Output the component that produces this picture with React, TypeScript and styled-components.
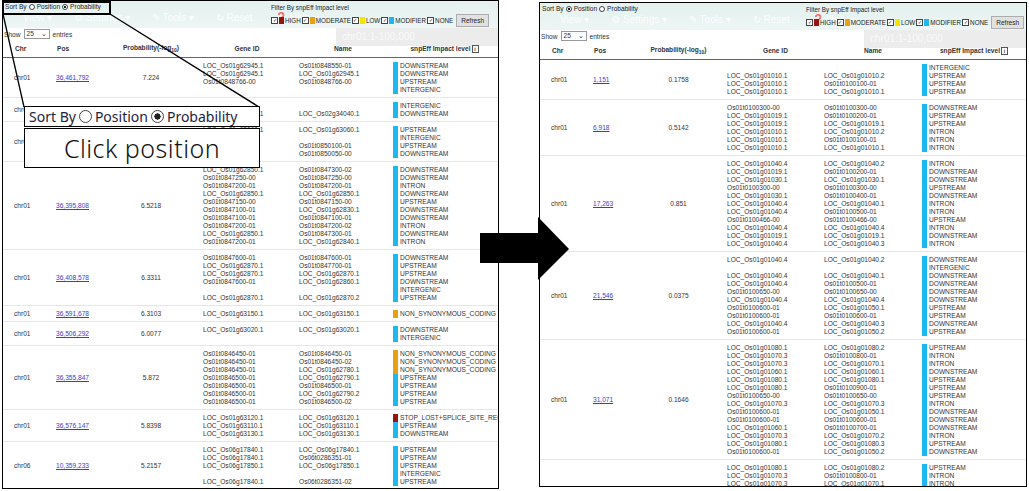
import React from "react";
import styled, { createGlobalStyle } from "styled-components";

const Global = createGlobalStyle`
  html, body { margin: 0; padding: 0; background: #fff; }
  body { font-family: "Liberation Sans", Arial, sans-serif; width: 1029px; height: 491px; overflow: hidden; }
`;

type Imp = { t: string; c: string };
type Row = { chr: string; pos: string; prob: string; genes: string[]; names: string[]; imps: Imp[] };

const M = "#1bb9f0", O = "#e8a010", H = "#9b1010";
const im = (s: string): Imp[] =>
  s.split(",").map((x) => {
    const map: Record<string, string> = { D: "DOWNSTREAM", U: "UPSTREAM", I: "INTRON", G: "INTERGENIC", N: "NON_SYNONYMOUS_CODING", S: "STOP_LOST+SPLICE_SITE_REGION" };
    return { t: map[x], c: x === "N" ? O : x === "S" ? H : M };
  });

const leftRows: Row[] = [
  { chr: "chr01", pos: "36,461,792", prob: "7.224", genes: ["LOC_Os01g62945.1", "LOC_Os01g62945.1", "Os01t0848766-00", ""], names: ["Os01t0848550-01", "LOC_Os01g62945.1", "Os01t0848766-00", ""], imps: im("D,D,U,G") },
  { chr: "chr01", pos: "36,469,321", prob: "7.0412", genes: ["", "LOC_Os02g34040.1"], names: ["", "LOC_Os02g34040.1"], imps: im("G,D") },
  { chr: "chr01", pos: "36,497,103", prob: "6.9811", genes: ["LOC_Os01g63060.1", "", "Os01t0850100-01", "Os01t0850050-00"], names: ["LOC_Os01g63060.1", "", "Os01t0850100-01", "Os01t0850050-00"], imps: im("U,G,U,D") },
  { chr: "chr01", pos: "36,395,808", prob: "6.5218", genes: ["LOC_Os01g62850.1", "Os01t0847250-00", "Os01t0847200-01", "LOC_Os01g62850.1", "Os01t0847150-00", "Os01t0847100-01", "Os01t0847100-01", "Os01t0847200-01", "LOC_Os01g62850.1", "Os01t0847200-01"], names: ["Os01t0847300-02", "Os01t0847250-00", "Os01t0847200-01", "LOC_Os01g62850.1", "Os01t0847150-00", "LOC_Os01g62830.1", "Os01t0847100-01", "Os01t0847200-02", "Os01t0847300-01", "LOC_Os01g62840.1"], imps: im("D,D,I,D,U,D,D,I,D,I") },
  { chr: "chr01", pos: "36,408,578", prob: "6.3311", genes: ["Os01t0847600-01", "LOC_Os01g62870.1", "LOC_Os01g62870.1", "Os01t0847600-01", "", "LOC_Os01g62870.1"], names: ["Os01t0847600-01", "Os01t0847700-01", "LOC_Os01g62870.1", "LOC_Os01g62860.1", "", "LOC_Os01g62870.2"], imps: im("D,U,U,D,G,U") },
  { chr: "chr01", pos: "36,591,678", prob: "6.3103", genes: ["LOC_Os01g63150.1"], names: ["LOC_Os01g63150.1"], imps: im("N") },
  { chr: "chr01", pos: "36,506,292", prob: "6.0077", genes: ["LOC_Os01g63020.1", ""], names: ["LOC_Os01g63020.1", ""], imps: im("D,G") },
  { chr: "chr01", pos: "36,355,847", prob: "5.872", genes: ["Os01t0846450-01", "Os01t0846450-01", "Os01t0846450-01", "Os01t0846500-01", "Os01t0846500-01", "Os01t0846500-01", "Os01t0846500-01"], names: ["Os01t0846450-01", "Os01t0846450-02", "LOC_Os01g62780.1", "LOC_Os01g62790.1", "Os01t0846500-01", "LOC_Os01g62790.2", "Os01t0846500-02"], imps: im("N,N,N,U,U,U,U") },
  { chr: "chr01", pos: "36,576,147", prob: "5.8398", genes: ["LOC_Os01g63120.1", "LOC_Os01g63110.1", "LOC_Os01g63130.1"], names: ["LOC_Os01g63120.1", "LOC_Os01g63110.1", "LOC_Os01g63130.1"], imps: im("S,U,D") },
  { chr: "chr06", pos: "10,359,233", prob: "5.2157", genes: ["LOC_Os06g17840.1", "LOC_Os06g17840.1", "LOC_Os06g17850.1", "", "LOC_Os06g17840.1"], names: ["LOC_Os06g17840.1", "Os06t0286351-01", "LOC_Os06g17850.1", "", "Os06t0286351-02"], imps: im("U,U,U,G,U") },
];

const rightRows: Row[] = [
  { chr: "chr01", pos: "1,151", prob: "0.1758", genes: ["", "LOC_Os01g01010.1", "LOC_Os01g01010.1", "LOC_Os01g01010.1"], names: ["", "LOC_Os01g01010.2", "Os01t0100100-01", "LOC_Os01g01010.1"], imps: im("G,U,U,U") },
  { chr: "chr01", pos: "6,918", prob: "0.5142", genes: ["Os01t0100300-00", "LOC_Os01g01019.1", "LOC_Os01g01019.1", "LOC_Os01g01010.1", "LOC_Os01g01010.1", "LOC_Os01g01010.1"], names: ["Os01t0100300-00", "Os01t0100200-01", "LOC_Os01g01019.1", "LOC_Os01g01010.2", "Os01t0100100-01", "LOC_Os01g01010.1"], imps: im("D,U,U,I,I,I") },
  { chr: "chr01", pos: "17,263", prob: "0.851", genes: ["LOC_Os01g01040.4", "LOC_Os01g01019.1", "LOC_Os01g01030.1", "Os01t0100300-00", "LOC_Os01g01030.1", "LOC_Os01g01040.4", "LOC_Os01g01040.4", "Os01t0100466-00", "LOC_Os01g01040.4", "LOC_Os01g01019.1", "LOC_Os01g01040.4"], names: ["LOC_Os01g01040.2", "Os01t0100200-01", "LOC_Os01g01030.1", "Os01t0100300-00", "Os01t0100400-01", "LOC_Os01g01040.1", "Os01t0100500-01", "Os01t0100466-00", "LOC_Os01g01040.4", "LOC_Os01g01019.1", "LOC_Os01g01040.3"], imps: im("I,D,D,U,D,I,I,U,I,D,I") },
  { chr: "chr01", pos: "21,546", prob: "0.0375", genes: ["LOC_Os01g01040.4", "", "LOC_Os01g01040.4", "LOC_Os01g01040.4", "Os01t0100650-00", "LOC_Os01g01040.4", "Os01t0100600-01", "Os01t0100600-01", "LOC_Os01g01040.4", "Os01t0100600-01"], names: ["LOC_Os01g01040.2", "", "LOC_Os01g01040.1", "Os01t0100500-01", "Os01t0100650-00", "LOC_Os01g01040.4", "LOC_Os01g01050.1", "Os01t0100600-01", "LOC_Os01g01040.3", "LOC_Os01g01050.2"], imps: im("D,G,D,D,D,D,U,U,D,U") },
  { chr: "chr01", pos: "31,071", prob: "0.1646", genes: ["LOC_Os01g01080.1", "LOC_Os01g01070.3", "LOC_Os01g01070.3", "LOC_Os01g01060.1", "LOC_Os01g01080.1", "LOC_Os01g01080.1", "Os01t0100650-00", "LOC_Os01g01070.3", "Os01t0100600-01", "Os01t0100600-01", "LOC_Os01g01060.1", "LOC_Os01g01070.3", "LOC_Os01g01080.1", "Os01t0100600-01"], names: ["LOC_Os01g01080.2", "Os01t0100800-01", "LOC_Os01g01070.1", "LOC_Os01g01060.1", "LOC_Os01g01080.1", "Os01t0100900-01", "Os01t0100650-00", "LOC_Os01g01070.3", "LOC_Os01g01050.1", "Os01t0100600-01", "Os01t0100700-01", "LOC_Os01g01070.2", "LOC_Os01g01080.3", "LOC_Os01g01050.2"], imps: im("U,I,I,D,U,U,U,I,D,D,D,I,U,D") },
  { chr: "chr01", pos: "33,667", prob: "0.1926", genes: ["LOC_Os01g01080.1", "LOC_Os01g01070.3", "LOC_Os01g01070.3", "LOC_Os01g01080.1", "LOC_Os01g01080.1", "LOC_Os01g01060.1", "Os01t0100650-00", "LOC_Os01g01070.3", "Os01t0100600-01", "LOC_Os01g01080.1"], names: ["LOC_Os01g01080.2", "Os01t0100800-01", "LOC_Os01g01070.1", "LOC_Os01g01080.1", "Os01t0100900-01", "LOC_Os01g01060.1", "Os01t0100650-00", "LOC_Os01g01070.3", "LOC_Os01g01050.1", "LOC_Os01g01080.3"], imps: im("U,I,I,U,U,D,U,I,D,U") },
];

const Page = styled.div`
  position: relative;
  display: flex;
  align-items: flex-start;
  gap: 40px;
  padding: 0 0 0 2px;
  width: 1029px;
  height: 491px;
  box-sizing: border-box;
`;

const Panel = styled.div<{ $w: number; $h: number; $top: number }>`
  position: relative;
  width: ${(p) => p.$w}px;
  height: ${(p) => p.$h}px;
  margin-top: ${(p) => p.$top}px;
  border: 1px solid #000;
  box-sizing: border-box;
  overflow: hidden;
  background: #fff;
  font-size: 6.6px;
  color: #333;
`;

const TopBand = styled.div`
  position: relative;
  height: 27px;
  background: linear-gradient(#e4f1ef, #edf6f4);
`;

const GhostMenu = styled.div`
  position: absolute;
  left: 20px;
  top: 11px;
  display: flex;
  gap: 22px;
  font-size: 10px;
  color: rgba(255, 255, 255, 0.85);
`;

const GrayBox = styled.div`
  position: absolute;
  right: 0;
  top: 27px;
  width: 162px;
  height: 18px;
  background: #ececec;
  color: #fafafa;
  font-size: 10px;
  padding: 3px 6px;
  box-sizing: border-box;
`;

const SortBy = styled.div`
  position: absolute;
  left: 2px;
  top: 2px;
  display: flex;
  align-items: center;
  gap: 2px;
  font-size: 6.6px;
  color: #222;
`;

const Radio = styled.span<{ $on?: boolean; $size: number }>`
  display: inline-block;
  width: ${(p) => p.$size}px;
  height: ${(p) => p.$size}px;
  border-radius: 50%;
  border: 1px solid #444;
  box-sizing: border-box;
  background: ${(p) => (p.$on ? `radial-gradient(circle, #222 0 38%, #fff 42%)` : "#fff")};
`;

const Filter = styled.div<{ $left: number }>`
  position: absolute;
  left: ${(p) => p.$left}px;
  top: 3px;
  font-size: 6.3px;
  color: #222;
  white-space: nowrap;
`;

const FilterRow = styled.div`
  display: flex;
  align-items: center;
  gap: 1px;
  margin-top: 3px;
  font-size: 6.3px;
  white-space: nowrap;
`;

const Check = styled.span`
  display: inline-block;
  width: 5px;
  height: 5px;
  border: 1px solid #444;
  background: #fff;
  font-size: 5px;
  line-height: 5px;
  text-align: center;
  flex: none;
`;

const Swatch = styled.span<{ $c: string }>`
  display: inline-block;
  width: 5px;
  height: 7px;
  background: ${(p) => p.$c};
  flex: none;
`;

const RefreshBtn = styled.span`
  margin-left: 2px;
  padding: 2px 4px;
  background: #e1e1e1;
  border: 1px solid #adadad;
  font-size: 6.5px;
`;

const ShowRow = styled.div`
  display: flex;
  align-items: center;
  gap: 3px;
  height: 12px;
  padding-left: 1px;
  font-size: 6.6px;
  color: #333;
`;

const Select = styled.span`
  border: 1px solid #999;
  padding: 0 2px;
  width: 20px;
  display: inline-flex;
  justify-content: space-between;
  background: #fff;
`;

const Grid = styled.div<{ $cols: string }>`
  position: relative;
  display: grid;
  grid-template-columns: ${(p) => p.$cols};
`;

const HeadRow = styled(Grid)`
  height: 17px;
  align-items: center;
  font-weight: bold;
  font-size: 6.6px;
  color: #333;
  border-bottom: 1px solid #666;
`;

const HeadCell = styled.div<{ $center?: boolean; $pl?: number }>`
  text-align: ${(p) => (p.$center ? "center" : "left")};
  padding-left: ${(p) => p.$pl ?? 0}px;
  white-space: nowrap;
`;

const DataRow = styled(Grid)`
  padding: 3.5px 0;
  border-bottom: 1px solid #e6e6e6;
  align-items: center;
`;

const Cell = styled.div<{ $center?: boolean; $pl?: number }>`
  text-align: ${(p) => (p.$center ? "center" : "left")};
  padding-left: ${(p) => p.$pl ?? 0}px;
  white-space: nowrap;
`;

const PosLink = styled.span`
  color: #3b3bd6;
  text-decoration: underline;
`;

const Lines = styled.div`
  display: flex;
  flex-direction: column;
  align-self: stretch;
  justify-content: center;
`;

const Line = styled.div`
  height: 8px;
  line-height: 8px;
  white-space: nowrap;
`;

const ImpLine = styled.div`
  display: flex;
  height: 8px;
  line-height: 8px;
  white-space: nowrap;
`;

const Bar = styled.span<{ $c: string }>`
  width: 5px;
  height: 100%;
  background: ${(p) => p.$c};
  margin-right: 2px;
  flex: none;
`;

const Sub = styled.sub`
  font-size: 5px;
`;

const Info = styled.span`
  display: inline-block;
  width: 5px;
  height: 6px;
  border: 1px solid #555;
  font-size: 5px;
  line-height: 6px;
  text-align: center;
  margin-left: 1px;
`;

const Overlay = styled.svg`
  position: absolute;
  left: 0;
  top: 0;
  pointer-events: none;
`;

const CalloutSort = styled.div`
  position: absolute;
  left: 24px;
  top: 106px;
  width: 236px;
  height: 21px;
  border: 1.5px solid #000;
  box-sizing: border-box;
  background: #fff;
  display: flex;
  align-items: center;
  gap: 3px;
  padding-left: 4px;
  font-family: "Noto Sans", "Open Sans", sans-serif;
  font-size: 14px;
  color: #1c2340;
  white-space: nowrap;
`;

const CalloutClick = styled.div`
  position: absolute;
  left: 24px;
  top: 128px;
  width: 236px;
  height: 40px;
  border: 1.5px solid #000;
  box-sizing: border-box;
  background: #fff;
  display: flex;
  align-items: center;
  justify-content: center;
  font-family: "Noto Sans", "Open Sans", sans-serif;
  font-size: 25px;
  font-weight: 300;
  letter-spacing: 0.5px;
  color: #111;
`;

const SmallBox = styled.div`
  position: absolute;
  left: 2px;
  top: 1px;
  width: 109px;
  height: 14px;
  border: 2px solid #000;
  box-sizing: border-box;
`;

type Cfg = { cols: string; chrPl: number; posPl: number; genePl: number; namePl: number; impPl: number; filterLeft: number };

function TablePanel({ rows, byProb, cfg, w, h, top }: { rows: Row[]; byProb: boolean; cfg: Cfg; w: number; h: number; top: number }) {
  return (
    <Panel $w={w} $h={h} $top={top}>
      <TopBand>
        <GhostMenu>
          <span>View ▾</span><span>⚙ Settings ▾</span><span>✎ Tools ▾</span><span>↻ Reset</span><span>❓ Help ▾</span>
        </GhostMenu>
        <SortBy>
          <span>Sort By</span>
          <Radio $size={6} $on={!byProb} />
          <span>Position</span>
          <Radio $size={6} $on={byProb} />
          <span>Probability</span>
        </SortBy>
        <Filter $left={cfg.filterLeft}>
          <div>Filter By snpEff Impact level</div>
          <FilterRow>
            <Check>✓</Check><Swatch $c={H} />HIGH
            <Check>✓</Check><Swatch $c={O} />MODERATE
            <Check>✓</Check><Swatch $c="#f2e600" />LOW
            <Check>✓</Check><Swatch $c={M} />MODIFIER
            <Check>✓</Check>NONE
            <RefreshBtn>Refresh</RefreshBtn>
          </FilterRow>
        </Filter>
      </TopBand>
      <GrayBox>chr01:1-100,000</GrayBox>
      <ShowRow>
        Show <Select><span>25</span><span>⌄</span></Select> entries
      </ShowRow>
      <HeadRow $cols={cfg.cols}>
        <HeadCell $pl={cfg.chrPl + 1}>Chr</HeadCell>
        <HeadCell $pl={cfg.posPl + 1}>Pos</HeadCell>
        <HeadCell $center>Probability(-log<Sub>10</Sub>)</HeadCell>
        <HeadCell $center>Gene ID</HeadCell>
        <HeadCell $center>Name</HeadCell>
        <HeadCell $center>snpEff Impact level<Info>i</Info></HeadCell>
      </HeadRow>
      {rows.map((r, i) => (
        <DataRow key={i} $cols={cfg.cols}>
          <Cell $pl={cfg.chrPl}>{r.chr}</Cell>
          <Cell $pl={cfg.posPl}><PosLink>{r.pos}</PosLink></Cell>
          <Cell $center>{r.prob}</Cell>
          <Lines style={{ paddingLeft: cfg.genePl }}>
            {r.genes.map((g, j) => <Line key={j}>{g || "\u00a0"}</Line>)}
          </Lines>
          <Lines style={{ paddingLeft: cfg.namePl }}>
            {r.names.map((g, j) => <Line key={j}>{g || "\u00a0"}</Line>)}
          </Lines>
          <Lines style={{ paddingLeft: cfg.impPl }}>
            {r.imps.map((m, j) => (
              <ImpLine key={j}><Bar $c={m.c} />{m.t}</ImpLine>
            ))}
          </Lines>
        </DataRow>
      ))}
    </Panel>
  );
}

const leftCfg: Cfg = { cols: "47px 53px 96px 96px 96px 1fr", chrPl: 11, posPl: 6, genePl: 4, namePl: 4, impPl: 2, filterLeft: 268 };
const rightCfg: Cfg = { cols: "47px 43px 97px 97px 98px 1fr", chrPl: 11, posPl: 6, genePl: 0, namePl: 0, impPl: 0, filterLeft: 266 };

export default function App() {
  return (
    <>
      <Global />
      <Page>
        <TablePanel rows={leftRows} byProb cfg={leftCfg} w={497} h={489} top={0} />
        <TablePanel rows={rightRows} byProb={false} cfg={rightCfg} w={488} h={485} top={2} />
        <SmallBox />
        <Overlay width={1029} height={491}>
          <line x1={3} y1={14} x2={24} y2={107} stroke="#000" strokeWidth={1.3} />
          <line x1={110} y1={14} x2={259} y2={107} stroke="#000" strokeWidth={1.3} />
          <polygon points="480,233 538,233 538,217 569,249 538,280 538,263 480,263" fill="#000" />
        </Overlay>
        <CalloutSort>
          <span>Sort By</span>
          <Radio $size={13} />
          <span>Position</span>
          <Radio $size={13} $on />
          <span>Probability</span>
        </CalloutSort>
        <CalloutClick>Click position</CalloutClick>
      </Page>
    </>
  );
}
